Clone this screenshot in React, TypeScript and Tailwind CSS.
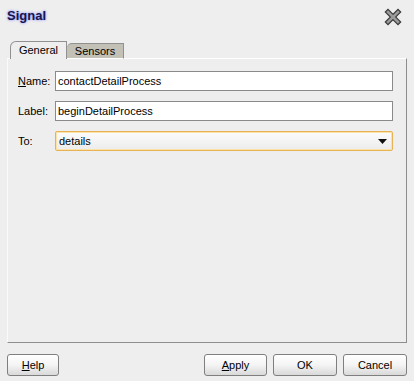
import React from 'react';

const font = { fontFamily: '"Liberation Sans", "DejaVu Sans", sans-serif' };

const CloseIcon: React.FC = () => (
    <svg width="18" height="18" viewBox="0 0 18 18">
        <path d="M4 4 L14 14 M14 4 L4 14" stroke="#3a3a3a" strokeWidth="5" strokeLinecap="square" />
        <path d="M4 4 L14 14 M14 4 L4 14" stroke="#9a9a9a" strokeWidth="2.6" strokeLinecap="square" />
    </svg>
);

const Field: React.FC<{ label: React.ReactNode; value: string }> = ({ label, value }) => (
    <div className="flex items-center h-[20px]">
        <div className="w-[37px] text-[11px] text-black">{label}</div>
        <div className="flex-1 h-[20px] border border-[#8a8a8a] bg-white flex items-center px-[2px] text-[11px] text-black">
            {value}
        </div>
    </div>
);

const Button: React.FC<{ children: React.ReactNode; className?: string }> = ({ children, className }) => (
    <div
        className={`h-[22px] rounded-[3px] border border-[#7f7f7f] bg-gradient-to-b from-white via-[#f4f4f4] to-[#d9d9d9] flex items-center justify-center text-[11px] text-black ${className ?? ''}`}
    >
        {children}
    </div>
);

export default function App() {
    return (
        <div className="w-[414px] h-[381px] bg-[#eeeeee] flex flex-col overflow-hidden" style={font}>
            {/* Header */}
            <div className="h-[41px] flex items-start justify-between pl-[7px] pr-[12px] pt-[6px]">
                <span
                    className="text-[13px] font-bold text-[#16164a]"
                    style={{ textShadow: '0 0 3px #9a9aff, 0 0 2px #b0b0ff' }}
                >
                    Signal
                </span>
                <div className="mt-[2px]">
                    <CloseIcon />
                </div>
            </div>

            {/* Tabs */}
            <div className="h-[18px] flex items-end pl-[10px] relative z-10">
                <div className="h-[18px] w-[57px] rounded-tl-[6px] border-t border-l border-r border-[#919191] bg-[#eeeeee] flex items-center justify-center text-[11px] text-black">
                    General
                </div>
                <div className="h-[16px] w-[57px] rounded-tl-[5px] border-t border-r border-[#919191] bg-[#c3c0b6] flex items-center justify-center text-[11px] text-black border-b border-b-white">
                    Sensors
                </div>
            </div>

            {/* Panel */}
            <div className="mx-[7px] h-[285px] border-t border-l border-t-white border-l-[#fafafa] border-r border-b border-r-[#8e8e8e] border-b-[#8e8e8e] -mt-px pt-[12px] pl-[10px] pr-[13px] flex flex-col gap-[10px]">
                <Field label={<><span className="underline">N</span>ame:</>} value="contactDetailProcess" />
                <Field label="Label:" value="beginDetailProcess" />
                <div className="flex items-center h-[20px]">
                    <div className="w-[37px] text-[11px] text-black">To:</div>
                    <div className="flex-1 h-[20px] rounded-[2px] border border-[#e9b355] shadow-[inset_0_0_0_1px_#fbe3a8] bg-gradient-to-b from-[#fcfcfc] to-[#ececec] flex items-center justify-between pl-[3px] pr-[5px] text-[11px] text-black">
                        <span>details</span>
                        <svg width="9" height="5" viewBox="0 0 9 5">
                            <path d="M0 0 H9 L4.5 5 Z" fill="#111" />
                        </svg>
                    </div>
                </div>
            </div>

            {/* Footer */}
            <div className="mt-[11px] flex items-center px-[7px]">
                <Button className="w-[52px]">
                    <span><span className="underline">H</span>elp</span>
                </Button>
                <div className="flex-1" />
                <div className="flex gap-[6px]">
                    <Button className="w-[63px]">
                        <span><span className="underline">A</span>pply</span>
                    </Button>
                    <Button className="w-[64px]">OK</Button>
                    <Button className="w-[64px]">Cancel</Button>
                </div>
            </div>
        </div>
    );
}
